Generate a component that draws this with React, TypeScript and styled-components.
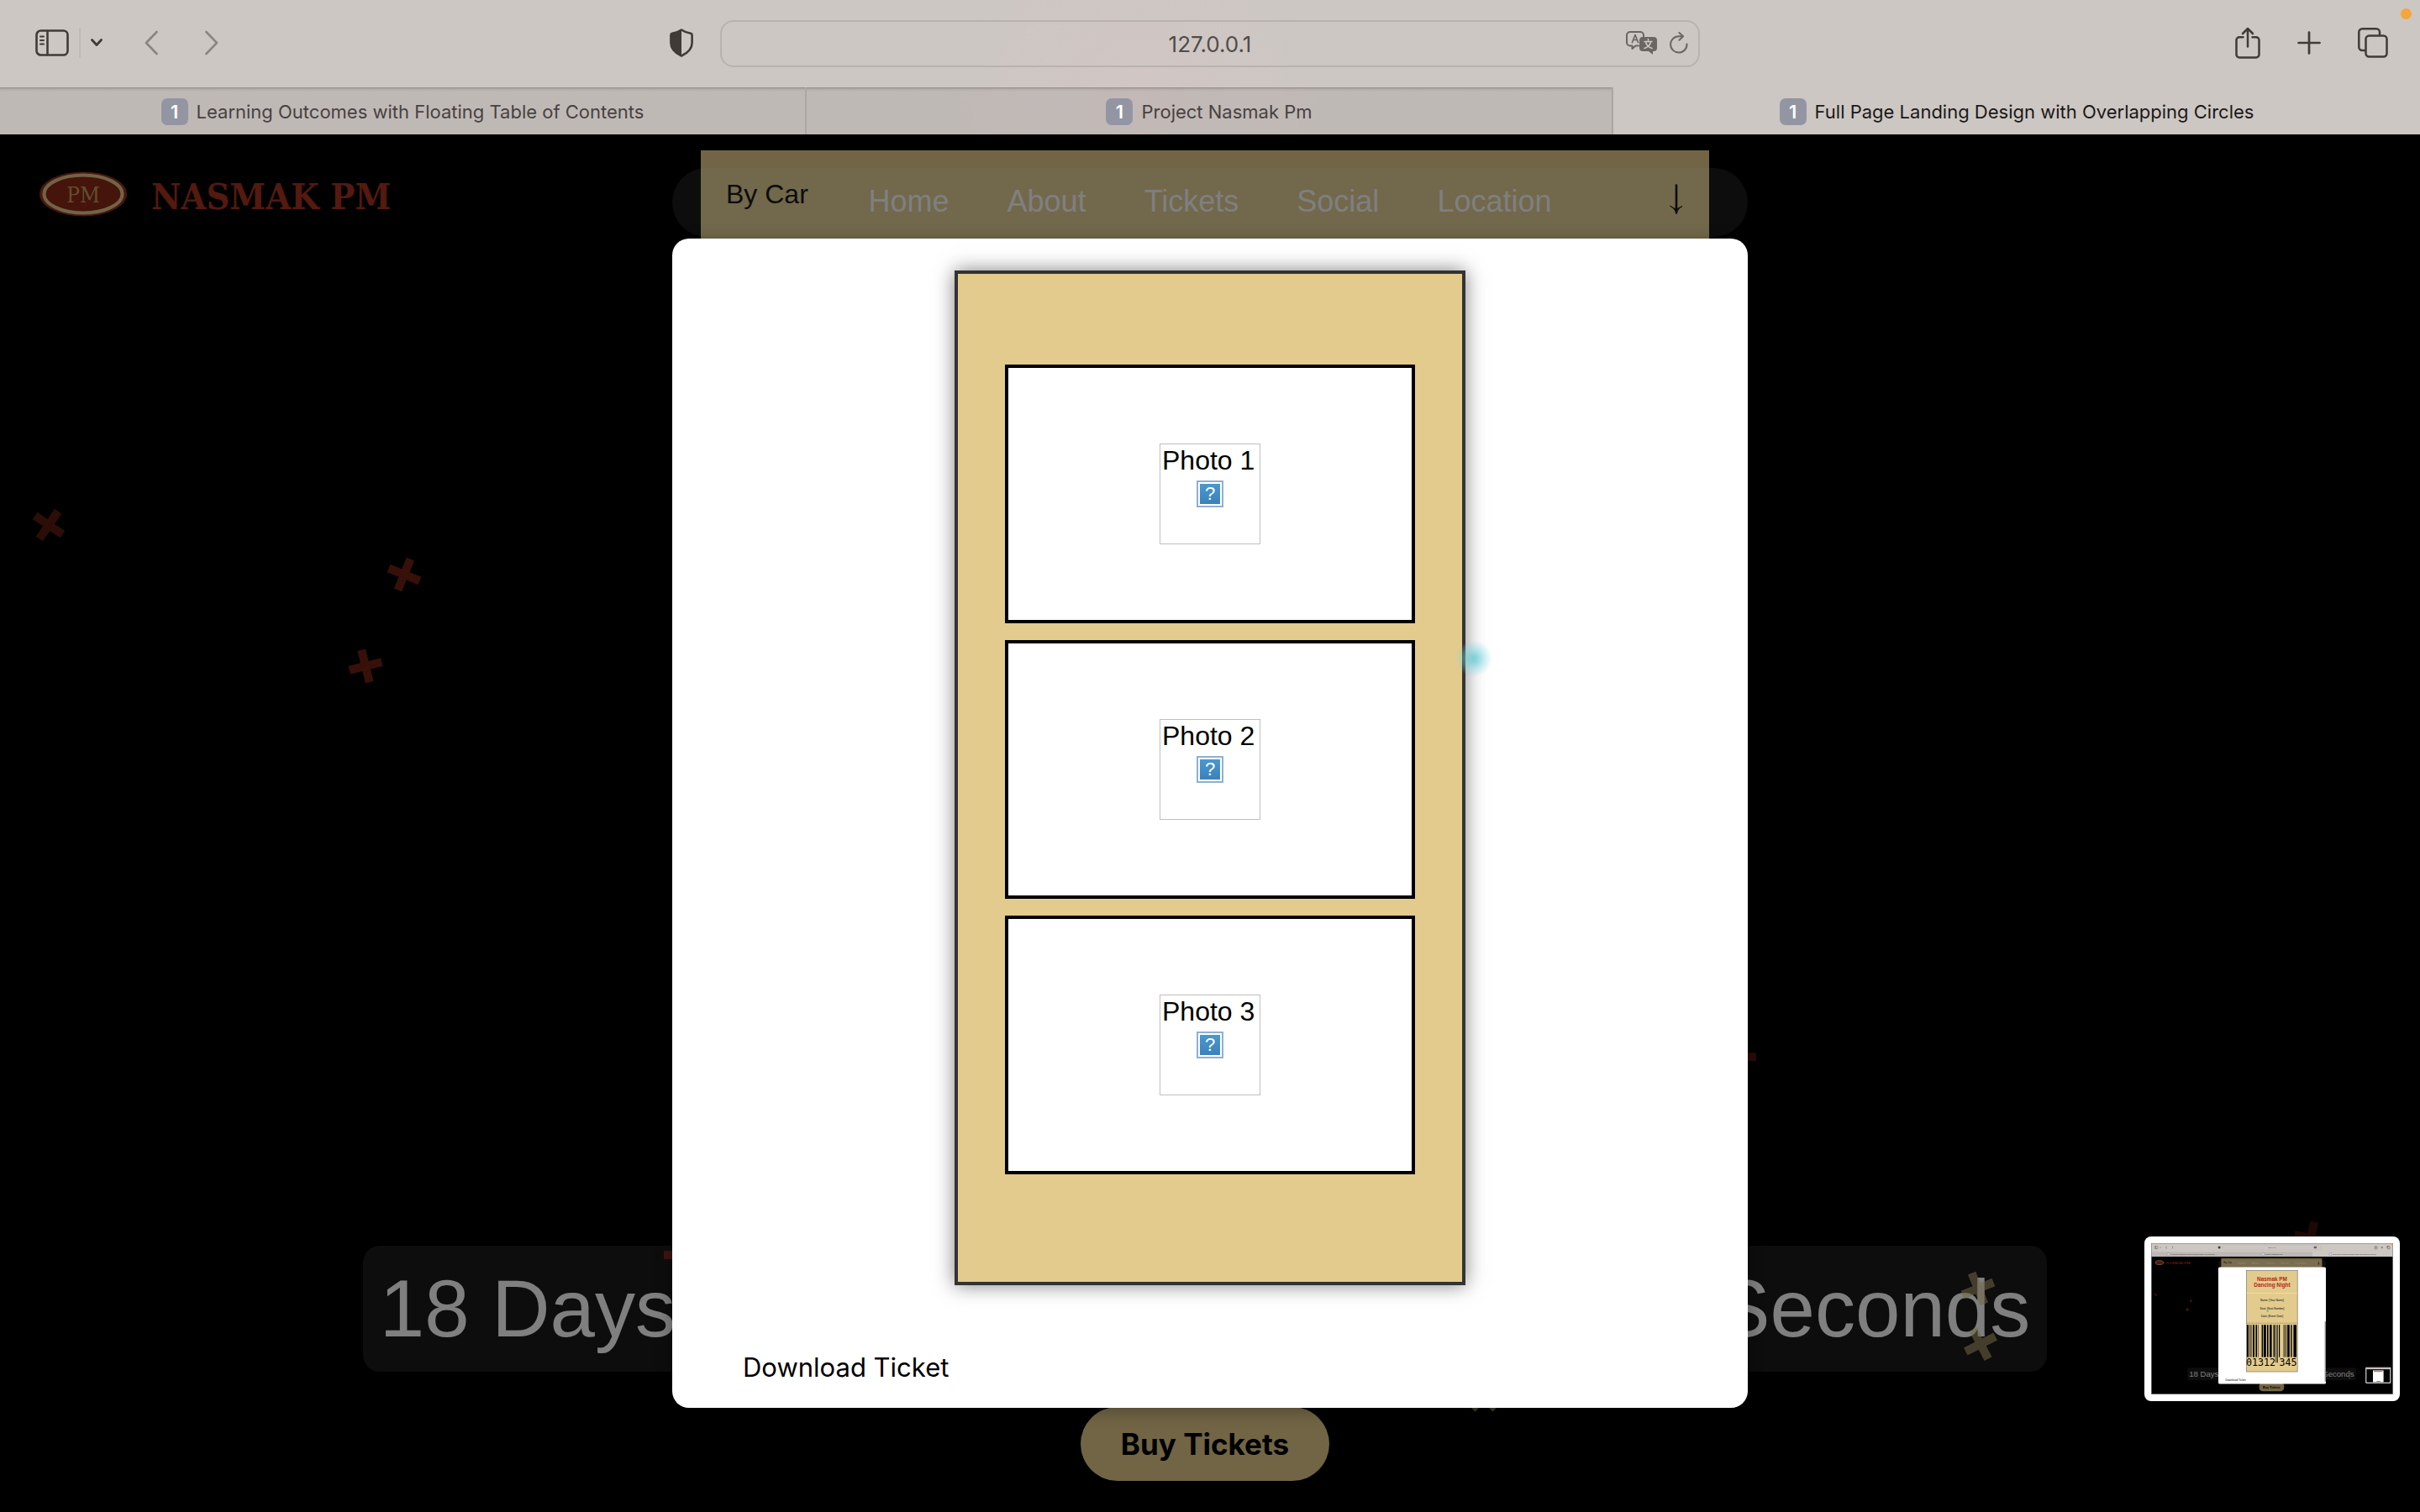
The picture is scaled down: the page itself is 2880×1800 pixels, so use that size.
import React from "react";
import styled, { createGlobalStyle } from "styled-components";

const SANS = `"Liberation Sans", Arial, sans-serif`;
const UI = `Inter, "Liberation Sans", sans-serif`;
const SLAB = `"DejaVu Serif Condensed", "DejaVu Serif", serif`;
const GOLD = "#e3cb8b";

const GlobalStyle = createGlobalStyle`
  * { box-sizing: border-box; }
  body { margin: 0; background: #000; font-family: ${SANS}; }
  button, input { font: inherit; color: inherit; border: 0; padding: 0; margin: 0; background: none; }
  a { color: inherit; text-decoration: none; }
  svg { display: block; }
`;

const Screen = styled.div`
  display: flex;
  flex-direction: column;
  min-height: 100vh;
`;

/* ---------- browser chrome ---------- */

const Chrome = styled.header`
  position: relative;
  color: #403b37;
  font-family: ${UI};
  background:
    radial-gradient(circle at 47% 110px, rgba(214, 196, 196, 0.45), rgba(214, 196, 196, 0) 220px),
    #ccc7c3;
`;

const Toolbar = styled.div`
  display: grid;
  grid-template-columns: 1fr minmax(400px, 1166px) 1fr;
  align-items: center;
  height: 104px;
`;

const ToolGroup = styled.div<{ $end?: boolean }>`
  display: flex;
  align-items: center;
  justify-content: ${(p) => (p.$end ? "flex-end" : "flex-start")};
  gap: ${(p) => (p.$end ? 44 : 12)}px;
  padding: ${(p) => (p.$end ? "0 38px 2px 0" : "0 32px 2px 42px")};
`;

const IconButton = styled.button<{ $dim?: boolean }>`
  display: block;
  color: ${(p) => (p.$dim ? "#8a8581" : "inherit")};
`;

const Divider = styled.span`
  width: 2px;
  height: 36px;
  background: #bfbab6;
`;

const Arrows = styled.div`
  display: flex;
  gap: 56px;
  margin: 0 auto 0 38px;
`;

const AddressBar = styled.form`
  display: grid;
  grid-template-columns: 100px 1fr 100px;
  align-items: center;
  height: 56px;
  border: 2px solid #b8b3af;
  border-radius: 16px;
`;

const Address = styled.input`
  grid-column: 2;
  min-width: 0;
  width: 100%;
  font-size: 26px;
  text-align: center;
  color: #504c49;
  outline: none;
`;

const AddressTools = styled.div`
  display: flex;
  align-items: center;
  justify-content: flex-end;
  gap: 14px;
  padding: 0 12px 2px 0;
  color: #6a6663;
`;

const RecordingDot = styled.span`
  position: absolute;
  top: 10px;
  right: 10px;
  width: 13px;
  height: 13px;
  border-radius: 50%;
  background: #f5a53c;
`;

const Tabs = styled.nav`
  display: grid;
  grid-template-columns: repeat(3, 1fr);
  height: 56px;
`;

const Tab = styled.a<{ $active?: boolean }>`
  display: flex;
  align-items: center;
  justify-content: center;
  gap: 10px;
  padding-top: 2px;
  font-size: 22px;
  line-height: 28px;
  white-space: nowrap;
  color: ${(p) => (p.$active ? "#1c1817" : "#48423f")};
  background: ${(p) =>
    p.$active
      ? "none"
      : "linear-gradient(rgba(90, 84, 80, 0.45), rgba(90, 84, 80, 0.12) 2px, rgba(90, 84, 80, 0) 5px), rgba(100, 92, 92, 0.12)"};
  border-right: ${(p) => (p.$active ? "0" : "2px solid #aca7a4")};
`;

const Badge = styled.span`
  display: grid;
  place-items: center;
  width: 32px;
  height: 32px;
  border-radius: 7px;
  background: #9396a2;
  color: #fff;
  font-weight: 600;
`;

/* ---------- page: stacked layers in one grid cell ---------- */

const Stage = styled.div`
  flex: 1;
  display: grid;
  grid-template-columns: minmax(0, 1fr);
  background: #000;
  > * { grid-area: 1 / 1; }
`;

const TravelPanel = styled.button`
  display: flex;
  align-items: center;
  justify-content: space-between;
  place-self: start center;
  width: 1200px;
  max-width: 100%;
  margin: 19px 12px 0 0;
  padding: 34px 30px 48px;
  background: ${GOLD};
  color: #000;
  font-family: ${SANS};
  font-size: 32px;
  line-height: 36px;

  svg { margin-top: 6px; }
  span { align-self: flex-start; }
`;

const SiteHeader = styled.header`
  display: grid;
  grid-template-columns: 1fr minmax(0, 1280px) 1fr;
  align-items: start;
  align-self: start;
  padding-top: 40px;
`;

const Brand = styled.a`
  display: flex;
  align-items: center;
  gap: 28px;
  height: 62px;
  padding-left: 46px;
  font: 700 43px/56px ${SLAB};
  color: #a8321e;
  white-space: nowrap;

  span { padding-top: 6px; }
`;

const NavPill = styled.nav`
  display: flex;
  align-items: center;
  justify-content: center;
  gap: 69px;
  height: 82px;
  padding-bottom: 3px;
  border-radius: 41px;
  background: rgba(255, 255, 255, 0.1);
  color: #fff;
  font-size: 36px;
  line-height: 40px;
`;

const Hero = styled.main`
  display: flex;
  flex-direction: column;
  align-items: center;
  justify-content: flex-end;
  gap: 42px;
  padding: 0 12px 37px 0;
`;

const Countdown = styled.div`
  display: flex;
  gap: 82px;
  padding: 20px;
  border-radius: 20px;
  background: rgba(255, 255, 255, 0.1);
  color: #fff;
  font-size: 96px;
  line-height: 110px;
  white-space: nowrap;
`;

const BuyButton = styled.button`
  height: 88px;
  padding: 0 48px;
  border-radius: 44px;
  background: ${GOLD};
  color: #000;
  font: 700 35px/44px ${UI};
`;

const Confetti = styled.div`
  position: relative;
  overflow: hidden;
`;

const Piece = styled.svg<{ $x: number; $y: number; $turn: number; $tone: string; $fade: number }>`
  position: absolute;
  left: ${(p) => p.$x - 20}px;
  top: ${(p) => p.$y - 20}px;
  color: ${(p) => p.$tone};
  opacity: ${(p) => p.$fade};
  transform: rotate(${(p) => p.$turn}deg);
`;

const Backdrop = styled.div`
  display: grid;
  place-items: center;
  background: rgba(0, 0, 0, 0.5);
  z-index: 1;
`;

const Modal = styled.section`
  position: relative;
  display: flex;
  flex-direction: column;
  align-items: center;
  width: 1280px;
  max-width: 100%;
  padding: 38px 84px 30px;
  border-radius: 20px;
  background: #fff;
  box-shadow: 0 4px 20px rgba(0, 0, 0, 0.3);
`;

const Ticket = styled.div`
  display: flex;
  flex-direction: column;
  align-items: center;
  width: 608px;
  gap: 20px;
  padding: 108px 56px 128px;
  border: 4px solid #333;
  background: #e2cb8c;
  box-shadow: 0 0 22px rgba(0, 0, 0, 0.5);
`;

const Frame = styled.div`
  display: grid;
  place-items: center;
  width: 100%;
  height: 308px;
  border: 4px solid #000;
  background: #fff;
`;

const MissingPhoto = styled.figure`
  display: flex;
  flex-direction: column;
  align-items: center;
  gap: 6px;
  width: 120px;
  height: 120px;
  margin: 0;
  padding: 1px 2px;
  border: 1px solid #bfbfbf;
`;

const Caption = styled.figcaption`
  align-self: flex-start;
  font-size: 32px;
  line-height: 36px;
  white-space: nowrap;
`;

const MissingIcon = styled.span`
  display: grid;
  place-items: center;
  width: 32px;
  height: 32px;
  border: 2px solid #8fb0d4;
  background: linear-gradient(#4a9bd0, #3b7fb9);
  box-shadow: inset 0 0 0 2px #fff;
  color: #fff;
  font: 400 22px/24px ${SANS};
`;

const DownloadButton = styled.button`
  align-self: flex-start;
  margin-top: 80px;
  font: 400 31px/36px ${UI};
`;

const PointerGlow = styled.span`
  position: absolute;
  top: 478px;
  left: 932px;
  width: 44px;
  height: 44px;
  border-radius: 50%;
  background: radial-gradient(circle, rgba(90, 200, 210, 0.7) 8%, rgba(120, 214, 224, 0.4) 40%, rgba(130, 220, 230, 0) 70%);
`;

const Preview = styled.aside`
  place-self: end;
  margin: 0 24px 132px 0;
  padding: 8px;
  border-radius: 8px;
  background: #fff;
  z-index: 2;
`;

/* ---------- icons ---------- */

const line = { fill: "none", stroke: "currentColor", strokeLinecap: "round", strokeLinejoin: "round" } as const;

const SidebarIcon = () => (
  <svg width="40" height="32" viewBox="0 0 40 32" {...line} strokeWidth="2.6">
    <rect x="1.5" y="1.5" width="37" height="29" rx="5" />
    <path d="M14.5 2v28" />
    <path d="M6 8.500h4M6 13h4M6 17.500h4" strokeWidth="2" />
  </svg>
);
const CaretIcon = () => (
  <svg width="14" height="10" viewBox="0 0 14 10" {...line} strokeWidth="2.800">
    <path d="M1.500 1.500 7 7.500l5.500-6" />
  </svg>
);
const BackIcon = () => (
  <svg width="16" height="30" viewBox="0 0 16 30" {...line} strokeWidth="2.600">
    <path d="M14.500 2 2 15l12.500 13" />
  </svg>
);
const ForwardIcon = () => (
  <svg width="16" height="30" viewBox="0 0 16 30" {...line} strokeWidth="2.600">
    <path d="M1.500 2 14 15 1.500 28" />
  </svg>
);
const ShieldIcon = () => (
  <svg width="28" height="34" viewBox="0 0 28 34" {...line} strokeWidth="2.600">
    <path d="M14 1.500c3.500 2.400 7 3.700 11 4.300 1 .2 1.600.9 1.600 1.900V17c0 7.500-5 12-12.600 15.500C6.400 29 1.400 24.500 1.400 17V7.700c0-1 .6-1.700 1.600-1.900 4-.6 7.500-1.900 11-4.300Z" />
    <path d="M14 1.500v31C6.400 29 1.400 24.500 1.400 17V7.700c0-1 .6-1.700 1.600-1.900 4-.6 7.500-1.900 11-4.300Z" fill="currentColor" stroke="none" />
  </svg>
);
const TranslateIcon = () => (
  <svg width="38" height="28" viewBox="0 0 38 28" {...line} strokeWidth="2">
    <path d="M15 17.500h-3.500L7.500 21v-3.500H5a4 4 0 0 1-4-4V5a4 4 0 0 1 4-4h12a4 4 0 0 1 4 4v1.500" />
    <path d="m7.500 13.500 3.500-9 3.500 9M8.800 10.500h4.400" strokeWidth="1.700" />
    <path d="M20 7h13a4 4 0 0 1 4 4v9a4 4 0 0 1-4 4h-1v4l-5-4h-7a4 4 0 0 1-4-4v-9a4 4 0 0 1 4-4Z" fill="currentColor" stroke="none" />
    <path d="M26.500 9.500v2M22 12.500h9M29.500 13c-1 4-4 6.500-7.500 7.500M23.500 13c1 4 4 6.500 7.500 7.500" stroke="#ccc7c3" strokeWidth="1.600" />
  </svg>
);
const ReloadIcon = () => (
  <svg width="22" height="26" viewBox="0 0 22 26" {...line} strokeWidth="2">
    <path d="M20.500 14.500a9.700 9.700 0 1 1-9.700-9.300h5" />
    <path d="m11.500 1 4.500 4.300-4.500 4.500" />
  </svg>
);
const ShareIcon = () => (
  <svg width="30" height="38" viewBox="0 0 30 38" {...line} strokeWidth="2.500">
    <path d="M9.500 12.300H5a3.500 3.500 0 0 0-3.500 3.500V33A3.500 3.500 0 0 0 5 36.500h20a3.500 3.500 0 0 0 3.500-3.500V15.800a3.500 3.500 0 0 0-3.500-3.500h-4.500" />
    <path d="M15 23.500V2M9 8l6-6 6 6" />
  </svg>
);
const PlusIcon = () => (
  <svg width="28" height="28" viewBox="0 0 28 28" {...line} strokeWidth="2.700">
    <path d="M14 1.500v25M1.500 14h25" />
  </svg>
);
const WindowsIcon = () => (
  <svg width="36" height="36" viewBox="0 0 36 36" {...line} strokeWidth="2.500">
    <rect x="9.500" y="9.500" width="25" height="25" rx="4" />
    <path d="M8 27H5.300a4 4 0 0 1-4-4V5.300a4 4 0 0 1 4-4H22a4 4 0 0 1 4 4V8" />
  </svg>
);
const DownArrow = () => (
  <svg width="18" height="38" viewBox="0 0 18 38" {...line} strokeWidth="2.600">
    <path d="M9 1.500V34" />
    <path d="M2 26.500c3.500 1.500 6 5 7 9 1-4 3.500-7.500 7-9L9 30Z" fill="currentColor" strokeWidth="1" />
  </svg>
);
const BrandMark = () => (
  <svg width="106" height="54" viewBox="0 0 106 54">
    <ellipse cx="53" cy="27" rx="52" ry="26.500" fill="#90331f" />
    <ellipse cx="53" cy="27" rx="46.500" ry="22.500" fill="#8a2817" stroke="#e3c78e" strokeWidth="4" />
    <text x="53" y="37" textAnchor="middle" fontFamily='"DejaVu Serif Condensed", "DejaVu Serif", serif' fontSize="26" fontWeight="400" fill="#c69a62">PM</text>
  </svg>
);

/* ---------- content ---------- */

const tabs = [
  "Learning Outcomes with Floating Table of Contents",
  "Project Nasmak Pm",
  "Full Page Landing Design with Overlapping Circles",
];
const links = ["Home", "About", "Tickets", "Social", "Location"];
const timeLeft = ["18 Days", "12 Hours", "34 Minutes", "56 Seconds"];
const photos = ["Photo 1", "Photo 2", "Photo 3"];

const RED = "#a8321e";
const pieces = [
  { x: 58, y: 465, turn: 34, tone: RED, fade: 0.54 },
  { x: 481, y: 524, turn: 22, tone: RED, fade: 0.66 },
  { x: 435, y: 633, turn: -14, tone: RED, fade: 0.66 },
  { x: 2070, y: 1099, turn: -3, tone: RED, fade: 0.5 },
  { x: 810, y: 1334, turn: 0, tone: RED, fade: 0.7 },
  { x: 2750, y: 1314, turn: 12, tone: RED, fade: 0.35 },
  { x: 1766, y: 1503, turn: 45, tone: GOLD, fade: 0.6 },
  { x: 2354, y: 1374, turn: -22, tone: GOLD, fade: 0.55 },
  { x: 2357, y: 1440, turn: -27, tone: GOLD, fade: 0.55 },
];

/* x, width and tone of the bars on the miniature ticket */
const bars: [number, number, string][] = [
  [1140, 18, "#000"], [1163, 38, "#7d6f4b"], [1210, 20, "#000"], [1244, 16, "#000"], [1268, 12, "#7d6f4b"],
  [1316, 16, "#000"], [1340, 28, "#000"], [1380, 16, "#000"], [1410, 26, "#000"], [1456, 16, "#000"],
  [1520, 12, "#000"], [1572, 44, "#7d6f4b"], [1622, 26, "#000"], [1662, 14, "#000"], [1694, 36, "#000"],
];

const MiniScreen = () => (
  <svg width="288" height="180" viewBox="0 0 2880 1800" fontFamily='"Liberation Sans", Arial, sans-serif' role="img" aria-label="Captured screen">
    <rect width="2880" height="1800" fill="#000" />
    <rect width="2880" height="160" fill="#ccc7c3" />
    <rect y="104" width="1920" height="56" fill="#bdb8b5" />
    <g fill="none" stroke="#5a5552" strokeWidth="5">
      <rect x="42" y="36" width="38" height="30" rx="5" />
      <path d="M56 36v30M107 47l7 8 7-8M189 37l-15 14 15 14M246 37l15 14-15 14" />
      <rect x="2660" y="42" width="30" height="26" rx="4" />
      <path d="M2675 56V32M2734 51h27M2748 37v27" />
      <rect x="2814" y="41" width="27" height="27" rx="4" />
      <path d="M2808 60V34h26" />
      <rect x="857" y="24" width="1166" height="56" rx="16" stroke="#bcb7b3" />
    </g>
    <circle cx="811" cy="51" r="15" fill="#403b37" />
    <rect x="1936" y="38" width="36" height="24" rx="6" fill="#6a6663" />
    <circle cx="2864" cy="16" r="8" fill="#f5a53c" />
    <g fill="#d5d6e4" stroke="#7f86b0" strokeWidth="5">
      <rect x="191" y="117" width="30" height="30" rx="8" />
      <rect x="1317" y="117" width="30" height="30" rx="8" />
      <rect x="2117" y="117" width="30" height="30" rx="8" />
    </g>
    <g fontSize="23" fill="#3c3735">
      <text x="1441" y="60" textAnchor="middle">127.0.0.1</text>
      <text x="234" y="140">{tabs[0]}</text>
      <text x="1360" y="140">{tabs[1]}</text>
      <text x="2160" y="140">{tabs[2]}</text>
    </g>
    <ellipse cx="99" cy="231" rx="48" ry="24" fill="#4d190f" stroke="#8c7048" strokeWidth="7" />
    <text x="180" y="249" fontSize="46" fontWeight="700" fontFamily='"Liberation Serif", serif' fill="#6a2013">NASMAK PM</text>
    <rect x="834" y="179" width="1200" height="140" fill="#726545" />
    <rect x="800" y="200" width="1280" height="82" rx="41" fill="#fff" fillOpacity="0.06" />
    <text x="863" y="242" fontSize="32" fill="#0d0d0d">By Car</text>
    <g fontSize="36" fill="#858585">
      <text x="1032" y="252">Home</text>
      <text x="1197" y="252">About</text>
      <text x="1361" y="252">Tickets</text>
      <text x="1543" y="252">Social</text>
      <text x="1709" y="252">Location</text>
    </g>
    <path d="M1994 218v34m-8-10 8 12 8-12" stroke="#0d0d0d" strokeWidth="5" fill="none" />
    <path d="m35 605 30 10-4 12M460 674l26 24m-20 6 12-32M410 790h44m-22-22v44" stroke="#6a2013" strokeWidth="8" fill="none" />
    <rect x="432" y="1483" width="2005" height="150" rx="20" fill="#0d0d0d" />
    <text x="452" y="1591" fontSize="96" fill="#808080">18 Days</text>
    <text x="2416" y="1591" fontSize="96" textAnchor="end" fill="#808080">Seconds</text>
    <path d="m2340 1520 28 30m0-34-26 38m2 20 24 44" stroke="#4a422d" strokeWidth="10" />
    <rect x="1286" y="1655" width="296" height="108" rx="44" fill="#726545" />
    <text x="1434" y="1731" fontSize="37" fontWeight="700" textAnchor="middle">Buy Tickets</text>
    <rect x="800" y="284" width="1280" height="1392" rx="16" fill="#fff" />
    <rect x="1136" y="324" width="606" height="1206" fill="#e2cb8c" stroke="#777" strokeWidth="7" />
    <g textAnchor="middle">
      <g fontSize="64" fontWeight="700" fill="#b02a1c">
        <text x="1440" y="450">Nasmak PM</text>
        <text x="1440" y="524">Dancing Night</text>
      </g>
      <g fontSize="32">
        <text x="1440" y="693">Name: [Your Name]</text>
        <text x="1440" y="785">Seat: [Seat Number]</text>
        <text x="1440" y="877">Date: [Event Date]</text>
      </g>
    </g>
    <path d="M1140 596h600" stroke="#f6eeda" strokeWidth="8" strokeDasharray="14 8" />
    <path d="M1140 952h600" stroke="#8f8059" strokeWidth="8" strokeDasharray="14 8" />
    {bars.map(([x, w, tone]) => (
      <rect key={x} x={x} y="972" width={w} height="384" fill={tone} />
    ))}
    <path d="M1488 972v450M1504 972v450" stroke="#000" strokeWidth="8" />
    <g fontFamily='"DejaVu Sans Mono", monospace' fontSize="116">
      <text x="1130" y="1464">01312</text>
      <text x="1526" y="1464">345</text>
    </g>
    <circle cx="1387" cy="808" r="13" fill="#6fc48d" />
    <rect x="2066" y="927" width="14" height="722" rx="7" fill="#8c8c8c" />
    <text x="884" y="1640" fontSize="33">Download Ticket</text>
    <rect x="2553" y="1477" width="300" height="190" rx="8" fill="#fff" />
    <rect x="2563" y="1487" width="280" height="170" fill="#000" />
    <rect x="2563" y="1487" width="280" height="14" fill="#ccc7c3" />
    <rect x="2640" y="1514" width="126" height="140" fill="#fff" />
    <rect x="2650" y="1522" width="106" height="10" fill="#c25b50" />
    <rect x="2684" y="1640" width="44" height="14" fill="#c4852f" />
    <rect x="3" y="3" width="2874" height="1794" fill="none" stroke="#8a8a8a" strokeWidth="8" />
  </svg>
);

export default function App() {
  return (
    <Screen>
      <GlobalStyle />
      <Chrome>
        <Toolbar>
          <ToolGroup>
            <IconButton aria-label="Sidebar"><SidebarIcon /></IconButton>
            <Divider />
            <IconButton aria-label="Tab groups"><CaretIcon /></IconButton>
            <Arrows>
              <IconButton $dim aria-label="Back"><BackIcon /></IconButton>
              <IconButton $dim aria-label="Forward"><ForwardIcon /></IconButton>
            </Arrows>
            <IconButton aria-label="Privacy report"><ShieldIcon /></IconButton>
          </ToolGroup>
          <AddressBar onSubmit={(e) => e.preventDefault()}>
            <Address aria-label="Address" defaultValue="127.0.0.1" />
            <AddressTools>
              <IconButton type="button" aria-label="Translate"><TranslateIcon /></IconButton>
              <IconButton type="button" aria-label="Reload"><ReloadIcon /></IconButton>
            </AddressTools>
          </AddressBar>
          <ToolGroup $end>
            <IconButton aria-label="Share"><ShareIcon /></IconButton>
            <IconButton aria-label="New tab"><PlusIcon /></IconButton>
            <IconButton aria-label="Show all tabs"><WindowsIcon /></IconButton>
          </ToolGroup>
        </Toolbar>
        <Tabs>
          {tabs.map((title, i) => (
            <Tab key={title} href="#" $active={i === 2}>
              <Badge>1</Badge>
              {title}
            </Tab>
          ))}
        </Tabs>
        <RecordingDot />
      </Chrome>

      <Stage>
        <TravelPanel>
          <span>By Car</span>
          <DownArrow />
        </TravelPanel>
        <Hero>
          <Countdown>
            {timeLeft.map((part) => (
              <span key={part}>{part}</span>
            ))}
          </Countdown>
          <BuyButton>Buy Tickets</BuyButton>
        </Hero>
        <SiteHeader>
          <Brand href="#">
            <BrandMark />
            <span>NASMAK PM</span>
          </Brand>
          <NavPill>
            {links.map((label) => (
              <a key={label} href="#">{label}</a>
            ))}
          </NavPill>
        </SiteHeader>
        <Confetti aria-hidden="true">
          {pieces.map((p) => (
            <Piece key={`${p.x}-${p.y}`} width="40" height="40" viewBox="0 0 40 40" $x={p.x} $y={p.y} $turn={p.turn} $tone={p.tone} $fade={p.fade}>
              <path d="M15 0h10v15h15v10H25v15H15V25H0V15h15Z" fill="currentColor" />
            </Piece>
          ))}
        </Confetti>
        <Backdrop>
          <Modal role="dialog" aria-label="Ticket">
            <Ticket>
              {photos.map((name) => (
                <Frame key={name}>
                  <MissingPhoto>
                    <Caption>{name}</Caption>
                    <MissingIcon>?</MissingIcon>
                  </MissingPhoto>
                </Frame>
              ))}
            </Ticket>
            <DownloadButton>Download Ticket</DownloadButton>
            <PointerGlow />
          </Modal>
        </Backdrop>
        <Preview>
          <MiniScreen />
        </Preview>
      </Stage>
    </Screen>
  );
}
